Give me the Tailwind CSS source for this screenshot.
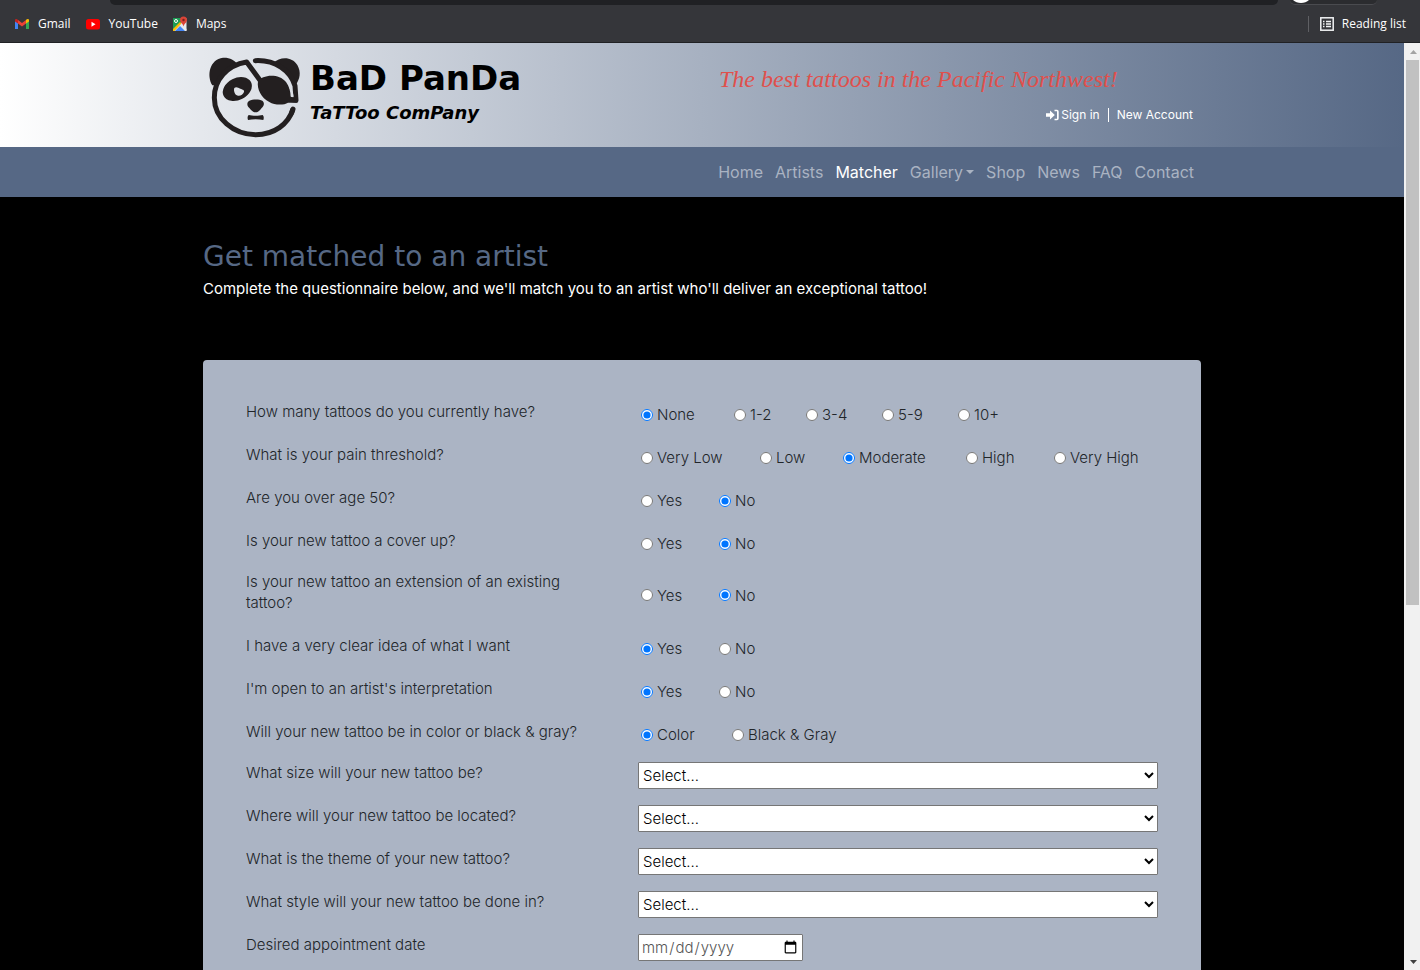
<!DOCTYPE html>
<html lang="en">
<head>
<meta charset="utf-8">
<meta name="viewport" content="width=device-width, initial-scale=1">
<title>Bad Panda Tattoo Company - Matcher</title>
<script src="https://cdn.jsdelivr.net/npm/@tailwindcss/browser@4"></script>
</head>
<body class="flex h-screen flex-col overflow-hidden bg-black font-['Inter',sans-serif] text-[15px] leading-[21px]">

<!-- Browser bookmarks bar -->
<div class="flex shrink-0 flex-col border-b border-[#202124] bg-[#35363a] font-['Open_Sans',sans-serif] text-xs text-white">
  <div class="flex h-[5px] pr-[43px] pl-[110px]">
    <div class="flex-1 rounded-b-xl bg-[#202124]"></div>
    <div class="ml-3 flex h-[5px] w-[87px] justify-start overflow-hidden rounded-b-xl border-b border-[#4a4b4f] bg-[#2b2c2f] pl-[3px]">
      <svg class="h-[3px] w-4" viewBox="0 0 16 3" fill="#fff"><path d="M0 0h16c-2 2-5 3-8 3S2 2 0 0z"/></svg>
    </div>
  </div>
  <nav class="flex h-[37px] items-center px-[14px]" aria-label="Bookmarks">
    <a href="#" class="flex items-center gap-2">
      <svg class="size-4" viewBox="0 0 16 16"><path fill="#4285f4" d="M1 4.500v8.500h3V7z"/><path fill="#34a853" d="M12 7v6h3V4.500z"/><path fill="#ea4335" d="M4 4l4 3 4-3v3.500l-4 3-4-3z"/><path fill="#c5221f" d="M1 4.500C1 2.600 3 2.800 4 4v3.500L1 5.500z"/><path fill="#fbbc04" d="M15 4.500C15 2.600 13 2.800 12 4v3.500l3-2z"/></svg>
      <span>Gmail</span>
    </a>
    <a href="#" class="ml-[14px] flex items-center gap-2">
      <svg class="size-4" viewBox="0 0 16 16"><rect x="1" y="3" width="14" height="10.500" rx="2.500" fill="#f00"/><path fill="#fff" d="M6.500 5.800v5l4-2.500z"/></svg>
      <span>YouTube</span>
    </a>
    <a href="#" class="ml-[14px] flex items-center gap-2">
      <svg class="size-4" viewBox="0 0 16 16"><rect x="1" y="2" width="13.500" height="13" rx="1" fill="#e8eaed"/><path fill="#1e9c55" d="M1 2h9L9 7l-8 8z"/><path fill="#4285f4" d="M3 15l5-5 5 5z"/><path fill="#fbbc04" d="M1 13l7-7 1.500 1.500L2.500 15H1z"/><path fill="#e8eaed" d="M8.500 9l1-1 5 5v2h-1z"/><circle cx="4" cy="5" r="1.500" fill="none" stroke="#fff"/><path fill="#db4437" d="M11.500.5a3.500 3.500 0 0 1 3.500 3.500c0 2.500-2.500 3-3.500 6.500C10.500 7 8 6.500 8 4A3.500 3.500 0 0 1 11.500.5z"/><circle cx="11.500" cy="4" r="1.200" fill="#7b231c"/></svg>
      <span>Maps</span>
    </a>
    <div class="ml-auto h-4 w-px bg-[#5f6064]"></div>
    <button class="ml-[11px] flex items-center gap-2">
      <svg class="h-[14px] w-[14px]" viewBox="0 0 14 14" fill="none" stroke="#f1f3f4"><rect x=".8" y=".8" width="12.400" height="12.400" stroke-width="1.500"/><path stroke-width="1.400" d="M3 4.500h1.500M6 4.500h5M3 7h1.500M6 7h5M3 9.500h1.500M6 9.500h5"/></svg>
      <span>Reading list</span>
    </button>
  </nav>
</div>

<div class="flex min-h-0 flex-1">
  <div class="min-w-0 flex-1 overflow-hidden">

    <header>
      <div class="bg-linear-to-r from-white to-[#566885]">
        <div class="mx-auto flex h-[104px] w-full max-w-[998px]">
          <a href="#" class="flex items-start pt-[9px] pl-[2px] text-black">
            <svg class="h-[90px] w-[100px]" viewBox="0 0 300 270" fill="#231f20" role="img" aria-label="Panda with an eye patch">
              <path d="M22 100C4 70 14 22 54 17c20-1 34 7 43 19C66 50 46 70 36 100z"/>
              <path d="M205 33c20-20 56-20 72 6 12 22 8 42-5 60-10-28-30-52-67-66z"/>
              <g fill="none" stroke="#231f20" stroke-width="15" stroke-linecap="round" stroke-linejoin="round">
                <path d="M151 26c60-3 105 30 119 75l3 44-28-5"/>
                <path d="M166 86l-41-56C66 40 28 82 28 137c0 62 57 111 124 111 55 0 98-31 112-77" stroke-linecap="butt"/>
                <path d="M264 171l-4 12"/>
              </g>
              <path d="M159 88c12-20 62-26 84 2 9 12 14 28 14 44l20 12v6h-28c-12 8-40 8-56-2-24-12-38-38-34-62z"/>
              <path fill="#dde0e6" d="M252 106c5 9 7 18 7 28h7c-1-12-5-22-14-28z"/>
              <ellipse cx="97" cy="111" rx="46" ry="33" transform="rotate(-27 97 111)"/>
              <path fill="#e0e3e8" d="M88 108c6-5 12 0 18 2 8 3 13 4 11 10-3 8-10 12-18 11-10-1-14-16-11-23z"/>
              <path d="M133 146c10-5 30-5 39 0 7 5 5 14 1 19-6 5-10 16-21 16s-16-11-22-16c-4-5-5-14 3-19z"/>
              <path d="M131 189c12 3 30 3 42 0 4 4 4 10 2 15-14-3-32-3-46 0-2-5-2-11 2-15z"/>
            </svg>
            <span class="flex flex-col pt-2 pl-[5px] font-['DejaVu_Sans',sans-serif]">
              <span class="text-[34px] leading-[36px] font-bold">BaD PanDa</span>
              <span class="pt-[3px] text-lg font-bold italic">TaTToo ComPany</span>
            </span>
          </a>
          <div class="ml-auto flex w-[482px] flex-col pr-2 text-white">
            <p class="pt-[19px] font-['Liberation_Serif',serif] text-2xl leading-[34px] text-[#e0504c] italic">The best tattoos in the Pacific Northwest!</p>
            <div class="flex items-center justify-end pt-[11px] text-xs">
              <a href="#" class="flex items-center gap-[2px]">
                <svg class="h-3 w-[13px]" viewBox="0 0 13 12" fill="currentColor"><path d="M0 4.200h4V1.500L8.800 6 4 10.500V7.800H0z"/><path d="M8.500.8H11A1.700 1.700 0 0 1 12.700 2.500v7A1.700 1.700 0 0 1 11 11.200H8.500V9.800H11V2.200H8.500z"/></svg>
                Sign in
              </a>
              <span class="mx-2 h-[14px] w-px bg-white"></span>
              <a href="#">New Account</a>
            </div>
          </div>
        </div>
      </div>
      <div class="bg-[#566885]">
        <nav class="mx-auto flex h-[50px] w-full max-w-[998px] items-center justify-end gap-3 pr-[7px] pb-px text-base text-[#aab3c2]" aria-label="Main">
          <a href="#">Home</a>
          <a href="#">Artists</a>
          <a href="#" class="text-white">Matcher</a>
          <a href="#" class="flex items-center gap-[3px]">Gallery<svg class="h-1 w-2" viewBox="0 0 8 4" fill="currentColor"><path d="M0 0h8L4 4z"/></svg></a>
          <a href="#">Shop</a>
          <a href="#">News</a>
          <a href="#">FAQ</a>
          <a href="#">Contact</a>
        </nav>
      </div>
    </header>

    <main class="mx-auto w-full max-w-[998px] pt-11">
      <h1 class="font-['DejaVu_Sans',sans-serif] text-[28px] leading-8 text-[#566885]">Get matched to an artist</h1>
      <p class="pt-[5px] text-white">Complete the questionnaire below, and we'll match you to an artist who'll deliver an exceptional tattoo!</p>

      <form class="mt-[61px] rounded-sm bg-[#abb4c4] px-[43px] pt-[41px] pb-10 font-light text-[#212529]">
        <fieldset class="flex items-center pb-[22px]">
          <legend class="float-left w-[392px] pr-10">How many tattoos do you currently have?</legend>
          <div class="-mb-1.5 flex flex-1 pl-[3px]">
            <label class="flex w-[93px] items-center gap-1"><input type="radio" name="count" class="size-3" checked>None</label>
            <label class="flex w-[72px] items-center gap-1"><input type="radio" name="count" class="size-3">1-2</label>
            <label class="flex w-[76px] items-center gap-1"><input type="radio" name="count" class="size-3">3-4</label>
            <label class="flex w-[76px] items-center gap-1"><input type="radio" name="count" class="size-3">5-9</label>
            <label class="flex items-center gap-1"><input type="radio" name="count" class="size-3">10+</label>
          </div>
        </fieldset>
        <fieldset class="flex items-center pb-[22px]">
          <legend class="float-left w-[392px] pr-10">What is your pain threshold?</legend>
          <div class="-mb-1.5 flex flex-1 pl-[3px]">
            <label class="flex w-[119px] items-center gap-1"><input type="radio" name="pain" class="size-3">Very Low</label>
            <label class="flex w-[83px] items-center gap-1"><input type="radio" name="pain" class="size-3">Low</label>
            <label class="flex w-[123px] items-center gap-1"><input type="radio" name="pain" class="size-3" checked>Moderate</label>
            <label class="flex w-[88px] items-center gap-1"><input type="radio" name="pain" class="size-3">High</label>
            <label class="flex items-center gap-1"><input type="radio" name="pain" class="size-3">Very High</label>
          </div>
        </fieldset>
        <fieldset class="flex items-center pb-[22px]">
          <legend class="float-left w-[392px] pr-10">Are you over age 50?</legend>
          <div class="-mb-1.5 flex flex-1 pl-[3px]">
            <label class="flex w-[78px] items-center gap-1"><input type="radio" name="age" class="size-3">Yes</label>
            <label class="flex items-center gap-1"><input type="radio" name="age" class="size-3" checked>No</label>
          </div>
        </fieldset>
        <fieldset class="flex items-center pb-5">
          <legend class="float-left w-[392px] pr-10">Is your new tattoo a cover up?</legend>
          <div class="-mb-1.5 flex flex-1 pl-[3px]">
            <label class="flex w-[78px] items-center gap-1"><input type="radio" name="cover" class="size-3">Yes</label>
            <label class="flex items-center gap-1"><input type="radio" name="cover" class="size-3" checked>No</label>
          </div>
        </fieldset>
        <fieldset class="flex items-center pb-[22px]">
          <legend class="float-left w-[392px] pr-10">Is your new tattoo an extension of an existing tattoo?</legend>
          <div class="-mb-1.5 flex flex-1 pl-[3px]">
            <label class="flex w-[78px] items-center gap-1"><input type="radio" name="extension" class="size-3">Yes</label>
            <label class="flex items-center gap-1"><input type="radio" name="extension" class="size-3" checked>No</label>
          </div>
        </fieldset>
        <fieldset class="flex items-center pb-[22px]">
          <legend class="float-left w-[392px] pr-10">I have a very clear idea of what I want</legend>
          <div class="-mb-1.5 flex flex-1 pl-[3px]">
            <label class="flex w-[78px] items-center gap-1"><input type="radio" name="idea" class="size-3" checked>Yes</label>
            <label class="flex items-center gap-1"><input type="radio" name="idea" class="size-3">No</label>
          </div>
        </fieldset>
        <fieldset class="flex items-center pb-[22px]">
          <legend class="float-left w-[392px] pr-10">I'm open to an artist's interpretation</legend>
          <div class="-mb-1.5 flex flex-1 pl-[3px]">
            <label class="flex w-[78px] items-center gap-1"><input type="radio" name="open" class="size-3" checked>Yes</label>
            <label class="flex items-center gap-1"><input type="radio" name="open" class="size-3">No</label>
          </div>
        </fieldset>
        <fieldset class="flex items-center pb-5">
          <legend class="float-left w-[392px] pr-10">Will your new tattoo be in color or black &amp; gray?</legend>
          <div class="-mb-1.5 flex flex-1 pl-[3px]">
            <label class="flex w-[91px] items-center gap-1"><input type="radio" name="color" class="size-3" checked>Color</label>
            <label class="flex items-center gap-1"><input type="radio" name="color" class="size-3">Black &amp; Gray</label>
          </div>
        </fieldset>
        <div class="flex h-[43px] items-start">
          <label for="size" class="w-[392px]">What size will your new tattoo be?</label>
          <select id="size" class="h-[27px] flex-1 rounded-[1px] border border-[#767676] bg-white text-black"><option>Select...</option></select>
        </div>
        <div class="flex h-[43px] items-start">
          <label for="place" class="w-[392px]">Where will your new tattoo be located?</label>
          <select id="place" class="h-[27px] flex-1 rounded-[1px] border border-[#767676] bg-white text-black"><option>Select...</option></select>
        </div>
        <div class="flex h-[43px] items-start">
          <label for="theme" class="w-[392px]">What is the theme of your new tattoo?</label>
          <select id="theme" class="h-[27px] flex-1 rounded-[1px] border border-[#767676] bg-white text-black"><option>Select...</option></select>
        </div>
        <div class="flex h-[43px] items-start">
          <label for="style" class="w-[392px]">What style will your new tattoo be done in?</label>
          <select id="style" class="h-[27px] flex-1 rounded-[1px] border border-[#767676] bg-white text-black"><option>Select...</option></select>
        </div>
        <div class="flex h-[43px] items-start">
          <label for="date" class="w-[392px]">Desired appointment date</label>
          <input id="date" type="date" class="h-[27px] w-[165px] rounded-[1px] border border-[#767676] bg-white px-[2px] text-[#555]">
        </div>
      </form>
    </main>
  </div>

  <!-- Page scrollbar -->
  <div class="flex w-4 shrink-0 flex-col items-center bg-[#f1f1f1] pl-[2px]" aria-hidden="true">
    <div class="flex h-[17px] items-center"><svg class="h-1 w-[7px]" viewBox="0 0 7 4" fill="#a3a3a3"><path d="M0 4h7L3.500 0z"/></svg></div>
    <div class="min-h-0 w-full flex-1 pr-px"><div class="h-[61%] bg-[#c1c1c1]"></div></div>
    <div class="flex h-[17px] items-center"><svg class="h-1 w-[7px]" viewBox="0 0 7 4" fill="#404040"><path d="M0 0h7L3.500 4z"/></svg></div>
  </div>
</div>
</body>
</html>
